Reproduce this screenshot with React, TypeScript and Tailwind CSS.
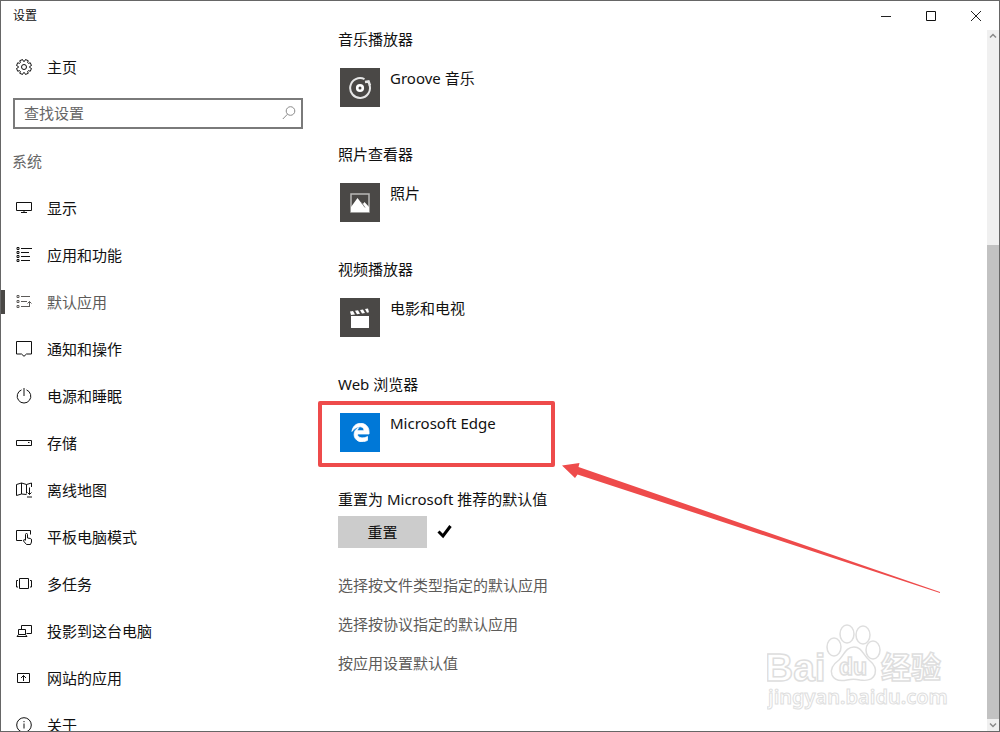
import React, { useState, type ReactNode } from 'react';
import { FaEdgeLegacy } from 'react-icons/fa';

type NavItem = {
  id: string;
  label: string;
  icon: ReactNode;
};

type DefaultApp = {
  category: string;
  name: string;
  tile: string;
  icon: ReactNode;
  highlighted?: boolean;
};

// outline of an eight-toothed gear centred in a 16x16 box
const gearPath = () => {
  const points: string[] = [];
  for (let i = 0; i < 8; i++) {
    const a = (i * Math.PI) / 4 + Math.PI / 8;
    [
      [-0.3, 5.7],
      [-0.2, 7.6],
      [0.2, 7.6],
      [0.3, 5.7],
    ].forEach(([da, r]) => {
      points.push(`${(8 + r * Math.cos(a + da)).toFixed(2)} ${(8 + r * Math.sin(a + da)).toFixed(2)}`);
    });
  }
  return `M${points.join('L')}Z`;
};

const Icon: React.FC<{ children: ReactNode }> = ({ children }) => (
  <svg className="size-4 shrink-0" viewBox="0 0 16 16" fill="none" stroke="currentColor" strokeWidth="1" aria-hidden="true">
    {children}
  </svg>
);

const navItems: NavItem[] = [
  {
    id: 'display',
    label: '显示',
    icon: <path d="M.5 2.5h15v8H.5zM8 10.5v2M5 12.5h6" />,
  },
  {
    id: 'apps',
    label: '应用和功能',
    icon: (
      <>
        <path d="M1 .5h2v2H1zM1 4.5h2v2H1zM1 8.5h2v2H1zM1 12.5h2v2H1z" />
        <path d="M5 1.5h11M5 5.5h8M5 9.5h9M5 13.5h9" />
      </>
    ),
  },
  {
    id: 'default',
    label: '默认应用',
    icon: (
      <>
        <path d="M1 1.5h2v2H1zM1 6.5h2v2H1zM1 11.5h2v2H1z" />
        <path d="M5 2.5h9M5 7.5h6M5 12.5h9M13.5 12.5v-5M11.5 9.5l2-2 2 2" />
      </>
    ),
  },
  {
    id: 'notifications',
    label: '通知和操作',
    icon: <path d="M.5.5h15v12.5h-5L8 15.3 5.5 13h-5z" />,
  },
  {
    id: 'power',
    label: '电源和睡眠',
    icon: <path d="M8 0v8M5.5 1.9a6.8 6.8 0 1 0 5 0" />,
  },
  {
    id: 'storage',
    label: '存储',
    icon: <path d="M.5 5.5h15v5H.5zM12 7.5h1.5" />,
  },
  {
    id: 'maps',
    label: '离线地图',
    icon: (
      <>
        <path d="M10.5 12.5l-5-.5-5 1.500V2.5l5-1.5 5 1.5 5-1.5v4M5.5 1v11M10.5 2.500v9" />
        <path d="M13.5 5.500v7M11.5 10.500l2 2 2-2M11 15h5" />
      </>
    ),
  },
  {
    id: 'tablet',
    label: '平板电脑模式',
    icon: (
      <>
        <path d="M6 11.5H.5v-10h14v4" />
        <path d="M9.5 11V5.5q0-1 1-1t1 1V9l3 .5q1 .3 1 1.5v2l-1 2.5h-4L7.5 12q-.5-1 .5-1.5l1.5 1" />
      </>
    ),
  },
  {
    id: 'multitask',
    label: '多任务',
    icon: <path d="M3.5 2.5h9v10h-9zM2 4.5H.5V11H2M14 4.5h1.5V11H14" />,
  },
  {
    id: 'project',
    label: '投影到这台电脑',
    icon: <path d="M5.5 6.5v-4h10v8h-5M2.5 6.5h7v5h-7zM2.5 11.5l-1.5 2h10l-1.5-2" />,
  },
  {
    id: 'websites',
    label: '网站的应用',
    icon: <path d="M1.5 3.5h12v9h-12zM7.5 11V5.5M5 8l2.500-2.500L10 8" />,
  },
  {
    id: 'about',
    label: '关于',
    icon: (
      <>
        <circle cx="8" cy="8" r="7.3" />
        <path d="M8 6.5v5M8 4v1.2" />
      </>
    ),
  },
];

const defaultApps: DefaultApp[] = [
  {
    category: '音乐播放器',
    name: 'Groove 音乐',
    tile: 'bg-[#4a4846]',
    icon: (
      <svg className="size-6" viewBox="0 0 24 24" fill="none" stroke="#e6e6e6" aria-hidden="true">
        <path d="M16.5 3.2A9.900 9.900 0 1 0 21.500 9" strokeWidth="2" />
        <path d="M17 6l3.500-.5 1.500 4" strokeWidth="2.500" />
        <circle cx="12" cy="12" r="2.800" stroke="#fff" strokeWidth="2.600" />
      </svg>
    ),
  },
  {
    category: '照片查看器',
    name: '照片',
    tile: 'bg-[#4a4846]',
    icon: (
      <svg className="size-5" viewBox="0 0 20 20" aria-hidden="true">
        <path d="M1 1h18v18H1z" fill="none" stroke="#b9b8b7" strokeWidth="1.500" />
        <path d="M1 19v-5l6.500-9 5 6.500L14.500 9l4.500 5v5z" fill="#fff" />
        <path d="M11.500 9.500l3.500 5" stroke="#8a8886" />
      </svg>
    ),
  },
  {
    category: '视频播放器',
    name: '电影和电视',
    tile: 'bg-[#4a4846]',
    icon: (
      <svg className="size-5" viewBox="0 0 20 20" fill="#fff" aria-hidden="true">
        <path d="M1 8h18v11.500q0 .5-.5.5h-17q-.5 0-.5-.5z" />
        <path d="M0 3.500l3-.5 2 3.500-4 .6zM5 2.700l3-.5 2 3.600-3 .5zM10 1.900l3-.5 2 3.600-3 .5zM15 1.100l3-.5 1 3.600-2 .5z" />
      </svg>
    ),
  },
  {
    category: 'Web 浏览器',
    name: 'Microsoft Edge',
    tile: 'bg-[#0078d7]',
    icon: <FaEdgeLegacy className="size-[19px] text-white" stroke="white" strokeWidth="22" aria-hidden="true" />,
    highlighted: true,
  },
];

const links = ['选择按文件类型指定的默认应用', '选择按协议指定的默认应用', '按应用设置默认值'];

const TitleBar: React.FC = () => (
  <header className="flex h-[29px] shrink-0 items-center justify-between pr-px pl-3">
    <h1 className="text-xs">设置</h1>
    <div className="flex h-full">
      <button aria-label="最小化" className="flex w-[45px] items-center justify-center hover:bg-gray-200">
        <svg className="size-3" viewBox="0 0 12 12" fill="none" stroke="#222">
          <path d="M1 6.5h10" />
        </svg>
      </button>
      <button aria-label="最大化" className="flex w-[45px] items-center justify-center hover:bg-gray-200">
        <svg className="size-3" viewBox="0 0 12 12" fill="none" stroke="#111">
          <path d="M1.5 1.5h9v9h-9z" />
        </svg>
      </button>
      <button aria-label="关闭" className="flex w-[45px] items-center justify-center hover:bg-red-500">
        <svg className="size-3" viewBox="0 0 12 12" fill="none" stroke="#222">
          <path d="M1 1l10 10M11 1L1 11" />
        </svg>
      </button>
    </div>
  </header>
);

const ScrollBar: React.FC = () => (
  <div className="flex w-3 shrink-0 flex-col bg-[#f0f0f0]">
    <button aria-label="向上滚动" className="flex h-3 shrink-0 items-center justify-center">
      <svg className="size-2" viewBox="0 0 8 8" fill="none" stroke="#8a8a8a" strokeWidth="1.500">
        <path d="M1 5.5l3-3 3 3" />
      </svg>
    </button>
    <div className="min-h-0 flex-[30]" />
    <div className="min-h-0 flex-[70] bg-[#c2c2c2]" />
    <button aria-label="向下滚动" className="flex h-3 shrink-0 items-center justify-center">
      <svg className="size-2" viewBox="0 0 8 8" fill="none" stroke="#8a8a8a" strokeWidth="1.500">
        <path d="M1 2.5l3 3 3-3" />
      </svg>
    </button>
  </div>
);

// red frame around an entry, with an arrow pointing at it
const Callout: React.FC = () => (
  <div className="pointer-events-none absolute -top-3 -left-[22px] h-[66px] w-[237px] rounded-xs border-4 border-[#ee4b4b]">
    <svg className="absolute top-[56px] left-[240px] h-[136px] w-[380px]" viewBox="0 0 380 136" fill="#ee4b4b" aria-hidden="true">
      <path d="M0 4.500L17.500 2l-1 4L378 131v1L15.500 13.500l-2.500 3.500z" />
    </svg>
  </div>
);

const Watermark: React.FC = () => (
  <svg
    className="pointer-events-none absolute right-12 bottom-4 h-[92px] w-[184px]"
    viewBox="0 0 184 92"
    fill="#fff"
    stroke="#dedede"
    strokeWidth="1.500"
    aria-hidden="true"
  >
    <text x="-2" y="58" fontSize="39" fontWeight="700" fontFamily="Liberation Sans, sans-serif">
      Bai
    </text>
    <ellipse cx="67" cy="24" rx="7" ry="9" />
    <ellipse cx="80" cy="11" rx="7" ry="9" />
    <ellipse cx="96" cy="12" rx="7" ry="9" />
    <ellipse cx="106" cy="27" rx="7" ry="9" />
    <path d="M87 24c-8 0-10 8-15 13-7 5-9 10-7 15 3 7 10 6 15 5 5-1 8-1 13 0 6 1 13 0 15-6 2-6-1-10-6-14-6-5-7-13-15-13z" />
    <text x="72" y="52" fontSize="23" fontWeight="700" fontFamily="Liberation Sans, sans-serif">
      du
    </text>
    <text x="114" y="55" fontSize="30" fontWeight="700" fontFamily="Noto Sans CJK SC, sans-serif">
      经验
    </text>
    <text x="1" y="81" fontSize="20" fontWeight="600" strokeWidth="1" fontFamily="Noto Sans, sans-serif">
      jingyan.baidu.com
    </text>
  </svg>
);

const App: React.FC = () => {
  const [selected, setSelected] = useState<string>('default');
  const [query, setQuery] = useState<string>('');

  return (
    <div className="relative flex h-screen flex-col overflow-hidden border border-[#666] bg-white font-['Noto_Sans','Noto_Sans_CJK_SC',sans-serif] text-[15px] leading-[18px] text-[#111]">
      <TitleBar />

      <div className="flex min-h-0 flex-1">
        <aside className="w-80 shrink-0 overflow-hidden pt-[13px]">
          <a href="#home" className="flex h-[47px] items-center gap-[15px] pl-[15px]">
            <Icon>
              <path d={gearPath()} strokeLinejoin="round" />
              <circle cx="8" cy="8" r="2.5" />
            </Icon>
            主页
          </a>

          <label className="mt-2 mr-[18px] ml-3 flex h-[31px] items-center border-2 border-[#7a7a7a] pr-[5px] pb-px pl-[9px]">
            <input
              type="text"
              aria-label="查找设置"
              placeholder="查找设置"
              value={query}
              onChange={(e) => setQuery(e.target.value)}
              className="min-w-0 flex-1 outline-none placeholder:text-[#666]"
            />
            <svg className="size-3.5 shrink-0" viewBox="0 0 14 14" fill="none" stroke="#8a8a8a" aria-hidden="true">
              <circle cx="8.5" cy="5" r="4.3" />
              <path d="M5.5 8.2L.8 13" />
            </svg>
          </label>

          <h2 className="mt-[23px] pl-[11px] text-[#666]">系统</h2>

          <nav className="mt-[14px]">
            {navItems.map((item) => (
              <button
                key={item.id}
                onClick={() => setSelected(item.id)}
                className={`flex h-[47px] w-full items-center text-left hover:bg-gray-100 ${selected === item.id ? 'text-[#5d5b59]' : ''}`}
              >
                <span className={`mr-[11px] h-6 w-1 ${selected === item.id ? 'bg-[#4a4846]' : ''}`} />
                <Icon>{item.icon}</Icon>
                <span className="ml-[15px]">{item.label}</span>
              </button>
            ))}
          </nav>
        </aside>

        <main className="min-w-0 flex-1 pl-[17px]">
          {defaultApps.map((app) => (
            <section key={app.category} className="mb-[38px]">
              <h3>{app.category}</h3>
              <button className="relative mt-5 ml-[2px] flex items-start gap-[10px] text-left">
                <span className={`flex h-[39px] w-10 items-center justify-center ${app.tile}`}>{app.icon}</span>
                <span className="mt-px">{app.name}</span>
                {app.highlighted && <Callout />}
              </button>
            </section>
          ))}

          <section>
            <h3>重置为 Microsoft 推荐的默认值</h3>
            <div className="mt-2 flex items-center gap-[10px]">
              <button className="h-8 w-[89px] bg-[#ccc] hover:bg-[#bbb]">重置</button>
              <svg className="size-4" viewBox="0 0 16 16" fill="none" stroke="#000" strokeWidth="3" role="img" aria-label="已完成">
                <path d="M1.5 7.5L6 12l7.500-10" />
              </svg>
            </div>
          </section>

          <ul className="mt-7 flex flex-col items-start gap-[21px]">
            {links.map((link) => (
              <li key={link}>
                <a href="#defaults" className="block text-[#5d5b59] hover:text-[#999]">
                  {link}
                </a>
              </li>
            ))}
          </ul>
        </main>

        <ScrollBar />
      </div>

      <Watermark />
    </div>
  );
};

export default App;
